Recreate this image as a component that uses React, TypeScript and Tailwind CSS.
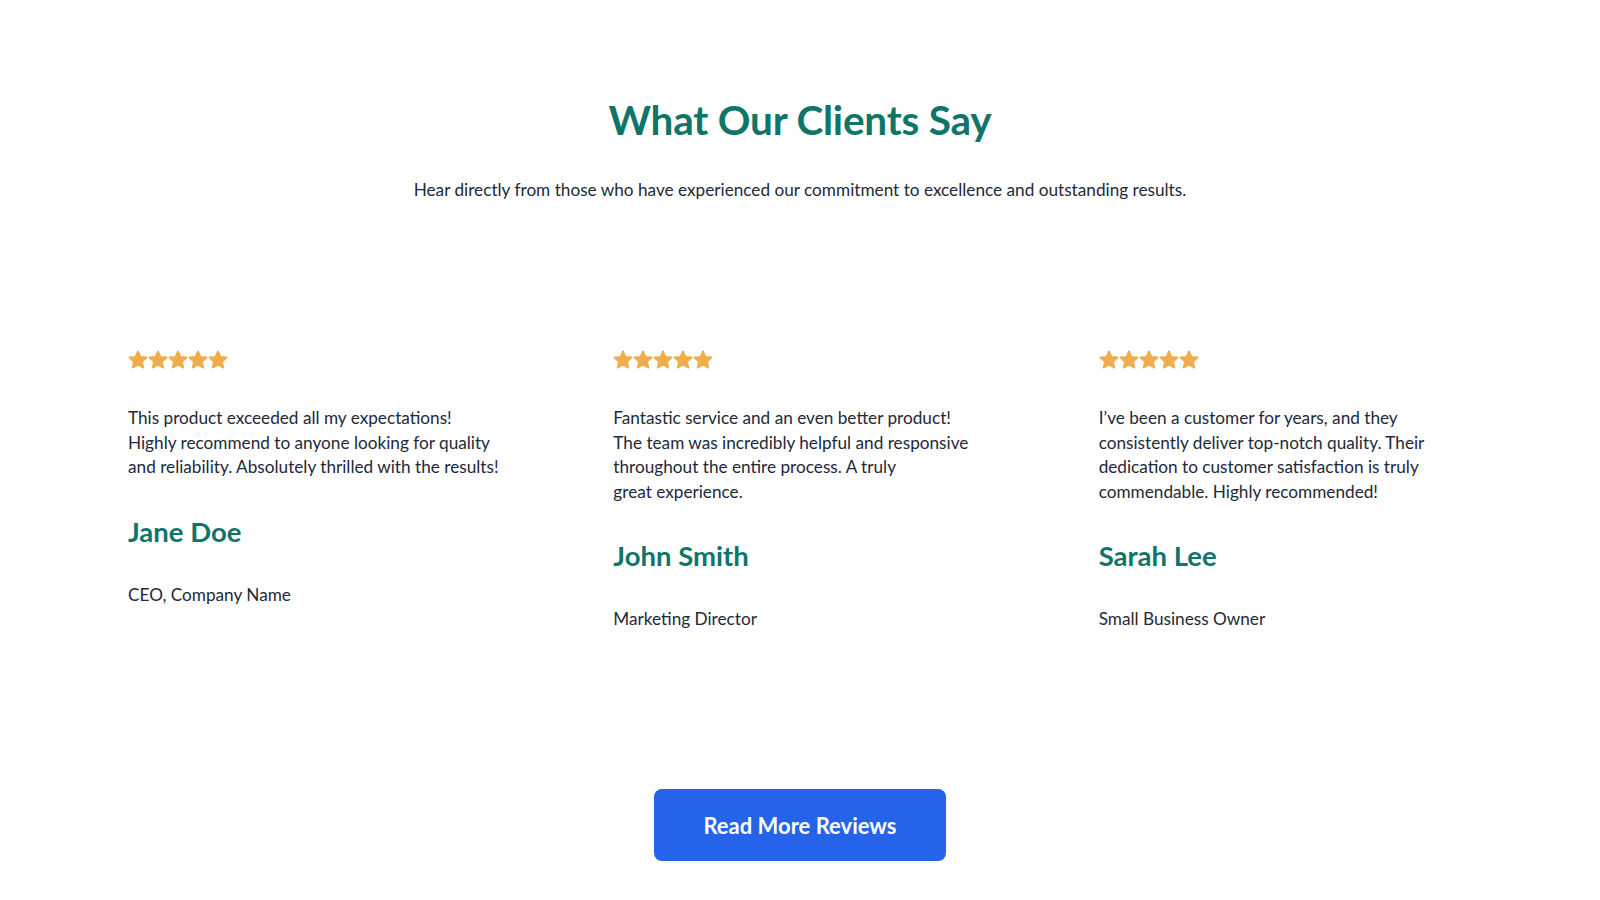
import React from "react";

const Star = () => (
  <svg width="20" height="20" viewBox="0 0 20 20" className="block">
    <path
      d="M10 1.4L12.47 6.9L18.55 7.5L13.99 11.6L15.3 17.6L10 14.5L4.7 17.6L6.01 11.6L1.45 7.5L7.53 6.9Z"
      fill="#F0AD4E"
      stroke="#F0AD4E"
      strokeWidth="1.8"
      strokeLinejoin="round"
    />
  </svg>
);

type T = { lines: string[]; name: string; role: string };

const data: T[] = [
  {
    lines: [
      "This product exceeded all my expectations!",
      "Highly recommend to anyone looking for quality",
      "and reliability. Absolutely thrilled with the results!",
    ],
    name: "Jane Doe",
    role: "CEO, Company Name",
  },
  {
    lines: [
      "Fantastic service and an even better product!",
      "The team was incredibly helpful and responsive",
      "throughout the entire process. A truly",
      "great experience.",
    ],
    name: "John Smith",
    role: "Marketing Director",
  },
  {
    lines: [
      "I’ve been a customer for years, and they",
      "consistently deliver top-notch quality. Their",
      "dedication to customer satisfaction is truly",
      "commendable. Highly recommended!",
    ],
    name: "Sarah Lee",
    role: "Small Business Owner",
  },
];

export default function App() {
  return (
    <div
      className="min-h-[900px] w-full bg-white text-[#1e2939]"
      style={{ fontFamily: "Lato, 'Noto Sans', sans-serif" }}
    >
      <section className="px-24 pt-[96px] pb-10">
        <div className="flex flex-col items-center text-center">
          <h2 className="text-[40.5px] leading-[48px] font-bold text-[#107569] tracking-[-0.2px]">
            What Our Clients Say
          </h2>
          <p className="mt-[34px] text-[17.2px] leading-[24px] text-[#1e2939]">
            Hear directly from those who have experienced our commitment to excellence and outstanding results.
          </p>
        </div>

        <div className="mt-[148px] grid grid-cols-3 gap-12">
          {data.map((t) => (
            <div key={t.name} className="px-8">
              <div className="flex">
                {[0, 1, 2, 3, 4].map((i) => (
                  <Star key={i} />
                ))}
              </div>
              <p className="mt-[36px] text-[17.2px] leading-[24.5px] whitespace-nowrap">
                {t.lines.map((l, i) => (
                  <React.Fragment key={i}>
                    {l}
                    {i < t.lines.length - 1 && <br />}
                  </React.Fragment>
                ))}
              </p>
              <h3 className="mt-[36px] text-[27.5px] leading-[32px] font-bold text-[#107569]">
                {t.name}
              </h3>
              <p className="mt-[35px] text-[17.2px] leading-[24px]">{t.role}</p>
            </div>
          ))}
        </div>

        <div className="mt-[158px] flex justify-center">
          <button className="h-[72px] w-[292px] rounded-lg bg-[#2563EB] text-[22px] font-bold text-white">
            Read More Reviews
          </button>
        </div>
      </section>
    </div>
  );
}
